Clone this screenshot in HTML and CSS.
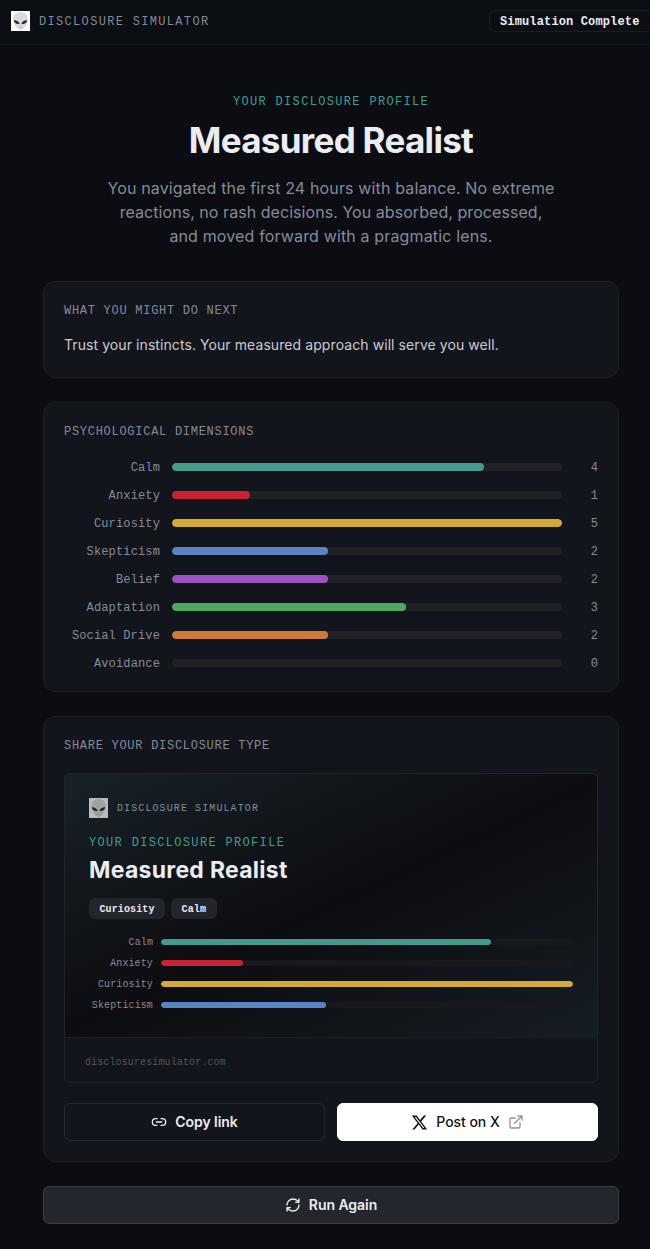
FILE: index.html
```
<!DOCTYPE html>
<html lang="en">
<head>
  <meta charset="UTF-8">
  <meta name="viewport" content="width=device-width, initial-scale=1.0">
  <title>Disclosure Simulator</title>
  <link rel="stylesheet" href="styles.css">
</head>
<body>
  <!-- shared icon shapes -->
  <svg class="defs" width="0" height="0">
    <symbol id="alien" viewBox="0 0 19 20">
      <rect width="19" height="20" fill="#fff"/>
      <path d="M9.5 1C5 1 2.3 4 2.3 8.2c0 4.8 4.2 10.8 7.2 10.8s7.2-6 7.2-10.8C16.7 4 14 1 9.5 1z" fill="#d9dadb"/>
      <path d="M2.8 9.3c2.4-.2 5 .9 5.8 3.6-2.7.7-5.3-.5-5.8-3.6zM16.2 9.3c-2.400-.2-5 .9-5.8 3.6 2.7.7 5.3-.5 5.8-3.6z" fill="#25272a"/>
      <path d="M8 16.3h3" stroke="#aaa" stroke-width=".6"/>
    </symbol>
  </svg>
  <header class="header">
    <div class="brand">
      <svg class="logo"><use href="#alien"/></svg>
      <span>DISCLOSURE SIMULATOR</span>
    </div>
    <div class="status">Simulation Complete</div>
  </header>
  <main class="main">
    <section class="intro">
      <p class="eyebrow">YOUR DISCLOSURE PROFILE</p>
      <h1>Measured Realist</h1>
      <p class="desc"><span class="l1">You navigated the first 24 hours with balance. No extreme</span><br><span class="l2">reactions, no rash decisions. You absorbed, processed,</span><br><span class="l3">and moved forward with a pragmatic lens.</span></p>
    </section>

    <section class="card next">
      <h3>WHAT YOU MIGHT DO NEXT</h3>
      <p>Trust your instincts. Your measured approach will serve you well.</p>
    </section>

    <section class="card">
      <h3>PSYCHOLOGICAL DIMENSIONS</h3>
      <ul class="bars">
        <li><span class="name">Calm</span><div class="track"><div class="fill calm" style="width:80%"></div></div><span class="num">4</span></li>
        <li><span class="name">Anxiety</span><div class="track"><div class="fill anxiety" style="width:20%"></div></div><span class="num">1</span></li>
        <li><span class="name">Curiosity</span><div class="track"><div class="fill curiosity" style="width:100%"></div></div><span class="num">5</span></li>
        <li><span class="name">Skepticism</span><div class="track"><div class="fill skepticism" style="width:40%"></div></div><span class="num">2</span></li>
        <li><span class="name">Belief</span><div class="track"><div class="fill belief" style="width:40%"></div></div><span class="num">2</span></li>
        <li><span class="name">Adaptation</span><div class="track"><div class="fill adaptation" style="width:60%"></div></div><span class="num">3</span></li>
        <li><span class="name">Social Drive</span><div class="track"><div class="fill social" style="width:40%"></div></div><span class="num">2</span></li>
        <li><span class="name">Avoidance</span><div class="track"></div><span class="num">0</span></li>
      </ul>
    </section>

    <section class="card">
      <h3>SHARE YOUR DISCLOSURE TYPE</h3>
      <div class="share">
        <div class="share-top">
          <div class="brand small">
            <svg class="logo"><use href="#alien"/></svg>
            <span>DISCLOSURE SIMULATOR</span>
          </div>
          <p class="eyebrow">YOUR DISCLOSURE PROFILE</p>
          <h2>Measured Realist</h2>
          <div class="tags"><span>Curiosity</span><span>Calm</span></div>
          <ul class="bars mini">
            <li><span class="name">Calm</span><div class="track"><div class="fill calm" style="width:80%"></div></div></li>
            <li><span class="name">Anxiety</span><div class="track"><div class="fill anxiety" style="width:20%"></div></div></li>
            <li><span class="name">Curiosity</span><div class="track"><div class="fill curiosity" style="width:100%"></div></div></li>
            <li><span class="name">Skepticism</span><div class="track"><div class="fill skepticism" style="width:40%"></div></div></li>
          </ul>
        </div>
        <div class="share-foot">disclosuresimulator.com</div>
      </div>
      <div class="actions">
        <a class="btn" href="javascript:;">
          <svg class="icon" viewBox="0 0 24 24"><path d="M9 17H7A5 5 0 0 1 7 7h2M15 7h2a5 5 0 1 1 0 10h-2M8 12h8"/></svg>
          <span>Copy link</span>
        </a>
        <a class="btn white" href="javascript:;">
          <svg class="x-logo" viewBox="0 0 24 24"><path d="M18.244 2.25h3.308l-7.227 8.26 8.502 11.24H16.17l-5.214-6.817L4.99 21.75H1.68l7.73-8.835L1.254 2.25H8.08l4.713 6.231zm-1.161 17.52h1.833L7.084 4.126H5.117z"/></svg>
          <span>Post on X</span>
          <svg class="icon faded" viewBox="0 0 24 24"><path d="M15 3h6v6M10 14 21 3M18 13v6a2 2 0 0 1-2 2H5a2 2 0 0 1-2-2V8a2 2 0 0 1 2-2h6"/></svg>
        </a>
      </div>
    </section>

    <a class="btn again" href="javascript:;">
      <svg class="icon" viewBox="0 0 24 24"><path d="M3 12a9 9 0 0 1 9-9 9.75 9.75 0 0 1 6.74 2.74L21 8M21 3v5h-5M21 12a9 9 0 0 1-9 9 9.75 9.75 0 0 1-6.74-2.74L3 16M8 16H3v5"/></svg>
      <span>Run Again</span>
    </a>
  </main>
</body>
</html>
```
FILE: styles.css
```
*{
  margin: 0;
  padding: 0;
  box-sizing: border-box;
}
body{
  height: 1249px;
  overflow: hidden;
  background-color: #0c0d12;
  color: #ecedf1;
  font-family: Inter, "Liberation Sans", sans-serif;
}
ul{
  list-style: none;
}
.defs{
  position: absolute;
}
.header{
  width: 662px;
  height: 45px;
  padding: 0 11px 3px;
  display: flex;
  align-items: center;
  justify-content: space-between;
  background-color: #0b0e12;
  border-bottom: 1px solid #17191e;
}
.brand{
  display: flex;
  align-items: center;
  gap: 9px;
  color: #858b98;
  font: 12px/14px "Liberation Mono", monospace;
  letter-spacing: 1.32px;
}
.brand span{
  padding-top: 2px;
}
.logo{
  width: 19px;
  height: 20px;
}
.status{
  width: 162px;
  height: 22px;
  padding: 1px 10px 0;
  border: 1px solid #1a1d22;
  border-radius: 6px;
  font: bold 12px/20px "Liberation Mono", monospace;
  letter-spacing: 0.14px;
  white-space: nowrap;
}
.main{
  width: 576px;
  margin-left: 43px;
  padding-top: 48px;
}
.intro{
  height: 188px;
  text-align: center;
}
.eyebrow{
  padding-top: 2px;
  color: #3f9f8d;
  font: 12px/14px "Liberation Mono", monospace;
  letter-spacing: 1.33px;
}
h1{
  margin-top: 11px;
  font-size: 35px;
  line-height: 40px;
  font-weight: 700;
  letter-spacing: -0.7px;
}
.desc{
  margin-top: 16px;
  color: #858b9a;
  font-size: 16px;
  line-height: 24px;
  white-space: nowrap;
}
.l1,
.l3{
  letter-spacing: 0.145px;
}
.l2{
  letter-spacing: 0.055px;
}
.card{
  padding: 20px;
  margin-bottom: 24px;
  background-color: #12151c;
  border: 1px solid #1c1f25;
  border-radius: 12px;
}
.card h3{
  margin-bottom: 20px;
  padding-top: 2px;
  color: #858b98;
  font: 12px/14px "Liberation Mono", monospace;
  letter-spacing: 0.72px;
}
.next{
  height: 97px;
}
.card.next h3{
  margin-bottom: 16px;
}
.next p{
  color: #cbccd0;
  font-size: 14px;
  line-height: 22px;
  letter-spacing: 0.08px;
  white-space: nowrap;
}
.bars li{
  display: flex;
  align-items: center;
  gap: 12px;
  margin-bottom: 12px;
  color: #858b98;
  font: 12px/14px "Liberation Mono", monospace;
  letter-spacing: 0.14px;
}
.bars li:last-child{
  margin-bottom: 0;
}
.name{
  width: 96px;
  padding-top: 2px;
  text-align: right;
}
.num{
  width: 24px;
  padding-top: 2px;
  text-align: right;
}
.track{
  flex: 1;
  height: 8px;
  border-radius: 4px;
  background-color: #202125;
  overflow: hidden;
}
.fill{
  height: 100%;
  border-radius: 4px;
}
.calm{
  background-color: #449b8c;
}
.anxiety{
  background-color: #c72335;
}
.curiosity{
  background-color: #d4a935;
}
.skepticism{
  background-color: #5884c4;
}
.belief{
  background-color: #9d51c2;
}
.adaptation{
  background-color: #4fa764;
}
.social{
  background-color: #ce7c35;
}
.share{
  height: 310px;
  border: 1px solid #20242a;
  border-radius: 6px;
  overflow: hidden;
}
.share-top{
  height: 263px;
  padding: 24px;
  background: linear-gradient(155deg, #172228 0%, #0d0d11 50%, #151d24 100%);
}
.small{
  font-size: 10px;
  letter-spacing: 1.1px;
}
.small .logo{
  opacity: 0.7;
}
.share .eyebrow{
  margin-top: 16px;
}
h2{
  margin-top: 4px;
  font-size: 23px;
  line-height: 32px;
  font-weight: 700;
  letter-spacing: 0.28px;
}
.tags{
  display: flex;
  gap: 6px;
  margin: 12px 0 16px;
}
.tags span{
  height: 21px;
  padding: 1px 10.5px 0;
  border-radius: 6px;
  background-color: #23252d;
  font: bold 10px/21px "Liberation Mono", monospace;
  letter-spacing: 0.12px;
}
.mini li{
  align-items: flex-start;
  gap: 8px;
  margin-bottom: 6px;
  font-size: 10px;
  line-height: 15px;
  letter-spacing: 0.12px;
}
.mini .name{
  width: 64px;
  padding-top: 0;
}
.mini .track{
  height: 6px;
  margin-top: 4px;
  background-color: #17191d;
}
.share-foot{
  padding: 17px 20px;
  border-top: 1px solid #1b1e24;
  color: #51555f;
  font: 10px/15px "Liberation Mono", monospace;
  letter-spacing: 0.12px;
}
.actions{
  display: flex;
  gap: 12px;
  margin-top: 20px;
}
.btn{
  flex: 1;
  height: 38px;
  display: flex;
  align-items: center;
  justify-content: center;
  gap: 8px;
  border: 1px solid #262930;
  border-radius: 6px;
  color: #ecedf1;
  font-size: 14px;
  font-weight: 600;
  letter-spacing: -0.05px;
  text-decoration: none;
}
.btn span{
  padding-bottom: 2px;
}
.white{
  background-color: #fff;
  border-color: #fff;
  color: #101218;
  font-weight: 500;
}
.again{
  background-color: #23262d;
  border-color: #393d47;
}
.icon{
  width: 16px;
  height: 16px;
  fill: none;
  stroke: currentColor;
  stroke-width: 2;
  stroke-linecap: round;
  stroke-linejoin: round;
}
.faded{
  opacity: 0.45;
}
.x-logo{
  width: 17px;
  height: 17px;
  fill: currentColor;
}
```
